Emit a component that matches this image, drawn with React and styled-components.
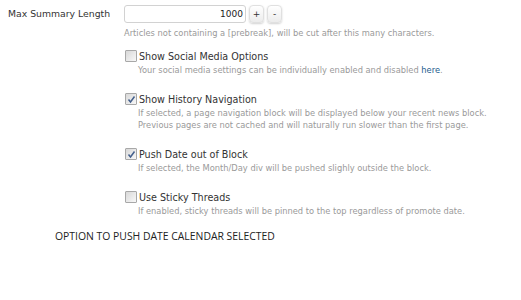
import React from "react";
import styled, { createGlobalStyle } from "styled-components";

const Global = createGlobalStyle`
  body {
    margin: 0;
    background: #fff;
    font-family: "DejaVu Sans", Verdana, sans-serif;
    color: #333;
  }
`;

const Page = styled.div`
  width: 521px;
  height: 300px;
  padding-top: 5px;
  box-sizing: border-box;
`;

const FieldRow = styled.div`
  display: grid;
  grid-template-columns: 124px 1fr;
  align-items: start;
`;

const Label = styled.div`
  padding-left: 8px;
  font-size: 9.3px;
  line-height: 18px;
  color: #333;
`;

const Body = styled.div`
  display: flex;
  flex-direction: column;
`;

const InputLine = styled.div`
  display: flex;
  align-items: center;
  gap: 3px;
`;

const NumberInput = styled.input`
  width: 122px;
  height: 18px;
  box-sizing: border-box;
  border: 1px solid #d2d2d2;
  border-radius: 3px;
  text-align: right;
  font-family: inherit;
  font-size: 9px;
  color: #222;
  padding: 0 2px;
  outline: none;
`;

const StepButton = styled.button`
  width: 15px;
  height: 18px;
  padding: 0;
  border: 1px solid #e0e0e0;
  border-radius: 4px;
  background: linear-gradient(#fff, #ececec);
  box-shadow: 0 1px 2px rgba(0, 0, 0, 0.18);
  font-family: inherit;
  font-size: 9px;
  color: #333;
`;

const Hint = styled.div`
  font-size: 8.3px;
  line-height: 12px;
  color: #9a9a9a;
  white-space: nowrap;
  margin-top: ${(p) => p.$top || 0}px;
`;

const Options = styled.div`
  display: flex;
  flex-direction: column;
  gap: 17px;
  margin-top: 11px;
`;

const Option = styled.div`
  display: grid;
  grid-template-columns: 14px 1fr;
`;

const Box = styled.span`
  box-sizing: border-box;
  width: 12px;
  height: 12px;
  margin-left: 1px;
  border: 1px solid #a8a8a8;
  border-radius: 1px;
  background: linear-gradient(135deg, #d8d8d8, #f8f8f8);
  display: flex;
  align-items: center;
  justify-content: center;
`;

const OptionTitle = styled.div`
  font-size: 9.6px;
  line-height: 14px;
  color: #333;
  padding-left: 1px;
`;

const Link = styled.a`
  color: #1d5c8c;
  text-decoration: none;
`;

const Caption = styled.div`
  margin-top: 12px;
  padding-left: 55px;
  font-family: "Open Sans", sans-serif;
  font-size: 10.4px;
  line-height: 14px;
  color: #222;
`;

function Check({ on }) {
  return (
    <Box>
      {on && (
        <svg width="9" height="9" viewBox="0 0 9 9">
          <path d="M1.5 4.5 L3.5 7 L7.5 1.5" fill="none" stroke="#44608c" strokeWidth="1.5" />
        </svg>
      )}
    </Box>
  );
}

const options = [
  {
    title: "Show Social Media Options",
    on: false,
    hint: (
      <>
        Your social media settings can be individually enabled and disabled <Link href="#">here</Link>.
      </>
    ),
  },
  {
    title: "Show History Navigation",
    on: true,
    hint: (
      <>
        If selected, a page navigation block will be displayed below your recent news block.
        <br />
        Previous pages are not cached and will naturally run slower than the first page.
      </>
    ),
  },
  {
    title: "Push Date out of Block",
    on: true,
    hint: "If selected, the Month/Day div will be pushed slighly outside the block.",
  },
  {
    title: "Use Sticky Threads",
    on: false,
    hint: "If enabled, sticky threads will be pinned to the top regardless of promote date.",
  },
];

export default function App() {
  return (
    <Page>
      <Global />
      <FieldRow>
        <Label>Max Summary Length</Label>
        <Body>
          <InputLine>
            <NumberInput defaultValue="1000" />
            <StepButton>+</StepButton>
            <StepButton>-</StepButton>
          </InputLine>
          <Hint $top={4}>
            Articles not containing a [prebreak], will be cut after this many characters.
          </Hint>
          <Options>
            {options.map((o) => (
              <Option key={o.title}>
                <Check on={o.on} />
                <OptionTitle>{o.title}</OptionTitle>
                <span />
                <Hint>{o.hint}</Hint>
              </Option>
            ))}
          </Options>
        </Body>
      </FieldRow>
      <Caption>OPTION TO PUSH DATE CALENDAR SELECTED</Caption>
    </Page>
  );
}
